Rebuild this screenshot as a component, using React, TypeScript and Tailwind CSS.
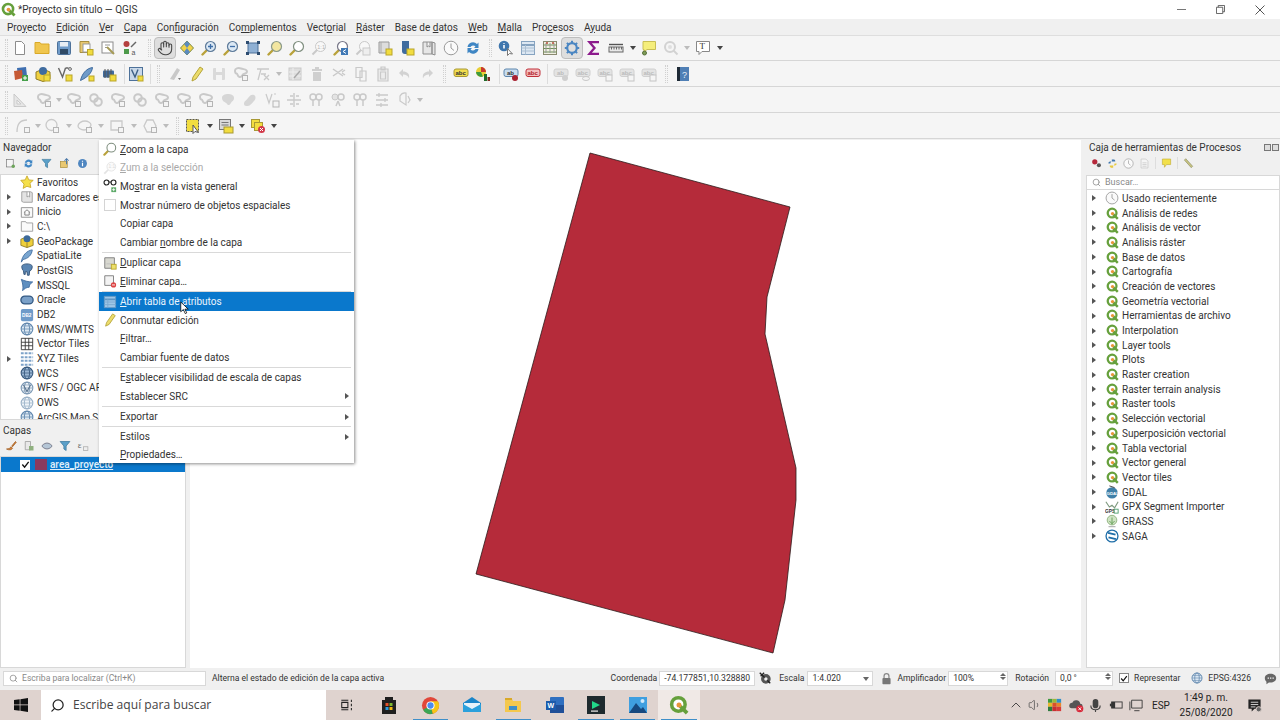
import React from "react";
import { ChevronUp, Hand, Search, Volume1 } from "lucide-react";

const G = "#c9c9c9";
const GD = "#b5b5b5";

function Mag({ fill = "#f4e9a8", sign, ring = "#8a9a8a" }: { fill?: string; sign?: string; ring?: string }) {
  return (
    <>
      <path d="M1.5 14.5 6 10" stroke="#b9a23a" strokeWidth="2.4" strokeLinecap="round" />
      <circle cx="9.5" cy="6.5" r="5" fill={fill} stroke={ring} strokeWidth="1.2" />
      {sign && <path d={sign} stroke="#3f6fa8" strokeWidth="1.3" />}
    </>
  );
}

function Blob({ c = G, box = true }: { c?: string; box?: boolean }) {
  return (
    <>
      <path d="M2 4.5C2 2.5 5 1.5 8 2.5s6 .5 6 3-3 2-4 3-1 3-3.500 2.500S5 7.500 3.500 7.500 2 6 2 4.500z" fill="none" stroke={c} strokeWidth="2" />
      {box && <rect x="9.500" y="9.500" width="5" height="5" fill="#f4f4f4" stroke={GD} />}
    </>
  );
}

function Shape({ d }: { d: string }) {
  return (
    <>
      <path d={d} fill="none" stroke={G} strokeWidth="1.300" />
      <rect x="9.500" y="9.500" width="5" height="5" fill="#f4f4f4" stroke={GD} />
    </>
  );
}

const ico: Record<string, React.ReactNode> = {
  new: <path d="M3.500 1.500h6l3 3v10h-9z" fill="#fff" stroke="#8c8c8c" />,
  open: <path d="M1 4V2.500h5l1 1.500h8v9.500H1z" fill="#f0c64e" stroke="#d9a928" />,
  save: (
    <>
      <rect x="1.500" y="1.500" width="13" height="13" rx="1" fill="#6f9bc9" stroke="#4d7199" />
      <rect x="4" y="2" width="8" height="4.500" fill="#e8eef4" />
      <rect x="4" y="9" width="8" height="5" fill="#2f4a66" />
    </>
  ),
  saveas: (
    <>
      <path d="M2 1.500h9v11H2z" fill="#e9c871" stroke="#a98f3f" />
      <rect x="5" y="4" width="7" height="8" fill="#fff" stroke="#999" />
      <rect x="9.500" y="9.500" width="5.500" height="5.500" fill="#f1dc3f" stroke="#b9a52a" />
    </>
  ),
  layout: (
    <>
      <rect x="2" y="2" width="11" height="11" fill="#fff" stroke="#8c8c8c" />
      <path d="M5 5h5M5 7.500h3" stroke="#999" />
      <path d="M7 7l7 7" stroke="#a59a56" strokeWidth="2" />
    </>
  ),
  style: (
    <>
      <circle cx="4.500" cy="4" r="3" fill="#b5403f" />
      <rect x="2" y="9" width="5" height="5" fill="#4d9a4a" />
      <path d="m9 7 5-5" stroke="#666" strokeWidth="1.500" />
      <text x="9.500" y="14.500" fontSize="7" fill="#555" fontFamily="Liberation Sans">a</text>
    </>
  ),
  hand: <Hand x="0" y="0" width="16" height="16" color="#444" strokeWidth={1.6} />,
  pansel: (
    <>
      <path d="M8 1l6.500 7L8 15 1.500 8z" fill="#f1d34a" stroke="#7c8a45" />
      <path d="M8 1l3 3-3 4-3-4zM8 15l-3-3 3-4 3 4z" fill="#5b8bc0" />
    </>
  ),
  zin: <Mag fill="#dbe8f4" ring="#5d7a99" sign="M7 6.500h5M9.500 4v5" />,
  zout: <Mag fill="#dbe8f4" ring="#5d7a99" sign="M7 6.500h5" />,
  zfull: (
    <>
      <rect x="3" y="3" width="10" height="10" fill="#8fb0d4" stroke="#4d7199" />
      <path d="M1 1h3v3H1zM12 1h3v3h-3zM1 12h3v3H1zM12 12h3v3h-3z" fill="#2d4c70" />
    </>
  ),
  zlayer: <Mag fill="#f2e6a0" />,
  zsel: <Mag fill="#fff" ring="#7f8f7f" />,
  znative: (
    <>
      <path d="M1.500 14.500 6 10" stroke={G} strokeWidth="2" />
      <circle cx="9.500" cy="6.500" r="5" fill="#f8f8f8" stroke={G} />
      <text x="6.300" y="8.500" fontSize="5.500" fill={GD} fontFamily="Liberation Sans">1:1</text>
    </>
  ),
  zlast: (
    <>
      <Mag fill="#fff" ring="#778" />
      <rect x="8" y="8" width="7" height="7" fill="#3f78b5" />
      <path d="M13 9.500 10 11.500l3 2" stroke="#fff" fill="none" />
    </>
  ),
  znext: (
    <>
      <path d="M1.500 14.500 6 10" stroke={G} strokeWidth="2" />
      <circle cx="9.500" cy="6.500" r="5" fill="#f8f8f8" stroke={G} />
      <rect x="8" y="8" width="7" height="7" fill="#eee" stroke={G} />
    </>
  ),
  mapview: (
    <>
      <path d="M2 2h10v11H2z" fill="#ddd" stroke="#999" />
      <path d="M4 2v11" stroke="#aaa" />
      <rect x="9" y="9" width="6" height="6" fill="#f1dc3f" stroke="#b9a52a" />
    </>
  ),
  bookmark: (
    <>
      <path d="M3 1h7v13H6c-2 0-3-1-3-3z" fill="#3f6c9f" />
      <rect x="8" y="9" width="7" height="6" fill="#f1dc3f" stroke="#b9a52a" />
    </>
  ),
  book: <path d="M2 2h9v12H2zM11 2l3 1v12l-3-1zM6 2v5l1.500-1L9 7V2" fill="#e6e6e6" stroke="#8f8f8f" />,
  clock: (
    <>
      <circle cx="8" cy="8" r="6.800" fill="#fafafa" stroke="#9a9a9a" />
      <path d="M8 3.500V8l3 2.500" fill="none" stroke="#9a9a9a" />
    </>
  ),
  refresh: (
    <>
      <path d="M2.500 7a5.500 5.500 0 0 1 9.500-3l1.500-1.500V8H9l1.500-1.500A3 3 0 0 0 5.500 7z" fill="#3f86c4" />
      <path d="M13.500 9A5.500 5.500 0 0 1 4 12l-1.500 1.500V8H7L5.500 9.500A3 3 0 0 0 10.500 9z" fill="#3f86c4" />
    </>
  ),
  identify: (
    <>
      <circle cx="6" cy="6" r="5.300" fill="#3f76ad" />
      <path d="M6 3v.8M6 5v3.500" stroke="#fff" strokeWidth="1.600" />
      <path d="M9.500 8.500v7l2-2 3 .5z" fill="#fff" stroke="#777" />
    </>
  ),
  table: (
    <>
      <rect x="1.500" y="1.500" width="13" height="13" fill="#dce7f2" stroke="#86a3c0" />
      <path d="M1.500 5h13" stroke="#86a3c0" strokeWidth="2" />
      <path d="M5.500 5v9.500M1.500 8h13M1.500 11h13" stroke="#a9bed2" />
    </>
  ),
  stat: (
    <>
      <rect x="1.500" y="1.500" width="13" height="13" fill="#f0efe2" stroke="#8a8a70" />
      <path d="M1.500 5h13M1.500 8.500h13M1.500 12h13" stroke="#6d8f57" />
      <path d="M4 3v10M8 3v10M12 3v10" stroke="#999" />
      <circle cx="5" cy="3" r="1" fill="#b84b3b" />
      <circle cx="11" cy="3" r="1" fill="#b84b3b" />
    </>
  ),
  gear: (
    <>
      <circle cx="8" cy="8" r="4.800" fill="none" stroke="#4b86c2" strokeWidth="2.200" />
      <path d="M8 .8v3M8 12.200v3M.8 8h3M12.200 8h3M2.900 2.900 5 5M11 11l2.100 2.100M13.100 2.900 11 5M5 11l-2.100 2.100" stroke="#4b86c2" strokeWidth="2" />
    </>
  ),
  sigma: <path d="M13 2.200H3.500L8.500 8l-5 5.800H13" fill="none" stroke="#8c1a8c" strokeWidth="2.300" />,
  ruler: (
    <>
      <path d="M1 4.500h14" stroke="#555" strokeWidth="1.400" />
      <rect x="1" y="7" width="14" height="5" fill="#e9e9e9" stroke="#666" />
      <path d="M3.500 7v2.500M6 7v2.500M8.500 7v2.500M11 7v2.500M13.500 7v2.500" stroke="#666" />
    </>
  ),
  note: (
    <>
      <path d="M2 1.500h12.500v8H6L3 12V9.500H2z" fill="#f5ee7b" stroke="#c9bf55" />
      <circle cx="3.500" cy="13" r="2" fill="#7d9a57" stroke="#56703a" />
    </>
  ),
  gsearch: (
    <>
      <circle cx="7" cy="7" r="5" fill="none" stroke="#d2d2d2" strokeWidth="2" />
      <circle cx="7" cy="7" r="2" fill="#dfdfdf" />
      <path d="m10.500 10.500 4 4" stroke="#d2d2d2" strokeWidth="2" />
    </>
  ),
  textbox: (
    <>
      <path d="M1.500 1.500h13v10H7l-3 3v-3H1.500z" fill="#fff" stroke="#888" />
      <text x="4.600" y="9.300" fontSize="9" fill="#333" fontFamily="Liberation Serif">T</text>
    </>
  ),
  addraster: (
    <>
      <path d="M4 2 13 1l1 9-9 2z" fill="#3f6fb0" />
      <path d="M1 5l8-1 1 8-8 2z" fill="#c65a35" />
      <rect x="9" y="9" width="6" height="6" fill="#46a04a" />
      <path d="M12 10v4M10 12h4" stroke="#fff" />
    </>
  ),
  addgpkg: (
    <>
      <path d="M1 6 8 3l7 3v7l-7 2.500L1 13z" fill="#f0d03f" stroke="#8f7d2a" />
      <circle cx="8" cy="5" r="4" fill="#3f6c9f" />
      <rect x="9" y="9" width="6" height="6" fill="#f1dc3f" stroke="#b9a52a" />
    </>
  ),
  addv: (
    <>
      <path d="M1.500 2l4 9 3-9M8.500 2h3" fill="none" stroke="#666" strokeWidth="1.400" />
      <circle cx="13" cy="3" r="1.400" fill="none" stroke="#666" />
      <rect x="9" y="9" width="6" height="6" fill="#f1dc3f" stroke="#b9a52a" />
    </>
  ),
  feather: (
    <>
      <path d="M1.500 14.500C3 8 7 2.500 13.500 1.500 13 7 8 11.500 1.500 14.500z" fill="#6f9bc9" stroke="#3f6c9f" />
      <rect x="10" y="10" width="5" height="5" fill="#f1dc3f" stroke="#b9a52a" />
    </>
  ),
  addmem: (
    <>
      <rect x="2" y="4.500" width="11" height="7" rx="1" fill="#3f6c9f" />
      <path d="M4 3v9M7 3v9M10 3v9" stroke="#555" />
      <rect x="9" y="9" width="6" height="6" fill="#f1dc3f" stroke="#b9a52a" />
    </>
  ),
  addvirt: (
    <>
      <rect x="1.500" y="1.500" width="13" height="13" fill="#c9d8e8" stroke="#4d7199" />
      <path d="M3.500 3.500 7 11l3-7.500" fill="none" stroke="#3c5f85" strokeWidth="1.400" />
      <rect x="10" y="10" width="5" height="5" fill="#f1dc3f" stroke="#b9a52a" />
    </>
  ),
  gpencils: (
    <>
      <path d="M3 13 10 2l3 2-6 10z" fill={G} />
      <path d="M11 12h3l-1.500 2z" fill="#777" />
    </>
  ),
  pencil: <path d="M3 15l1-4L11 1l3 2-7 10z" fill="#ecdc6b" stroke="#b5a53c" />,
  gsave: (
    <>
      <rect x="2" y="2" width="12" height="12" rx="1" fill="#dadada" />
      <rect x="5" y="2" width="6" height="4" fill="#f5f5f5" />
      <rect x="5" y="9" width="6" height="5" fill="#f5f5f5" />
    </>
  ),
  gblob: <Blob />,
  gblob2: (
    <>
      <circle cx="6" cy="6" r="3.800" fill="none" stroke={G} strokeWidth="2" />
      <circle cx="10" cy="10" r="3.800" fill="none" stroke={G} strokeWidth="2" />
    </>
  ),
  gblob3: <path d="M2 6c0-3 3-4 6-4s6 1 6 4-2 3-3 5-3 3-4 1-5-2-5-6z" fill="#d6d6d6" />,
  gblob4: <path d="M2 12c0-3 2-3 4-6s4-4 6-3 2 4 0 6-4 5-6 5-4 0-4-2z" fill="#d6d6d6" />,
  gfx: (
    <>
      <path d="M2 3h12M6 3l-3 11M6 8h5M9 9l5 5M14 9l-5 5" fill="none" stroke={G} strokeWidth="1.300" />
    </>
  ),
  gtabed: (
    <>
      <rect x="2" y="2" width="12" height="12" fill="#dedede" stroke={G} />
      <path d="M2 6h12M2 10h12M6 2v12" stroke="#eee" />
      <path d="m7 12 6-7" stroke="#aaa" strokeWidth="1.500" />
    </>
  ),
  gtrash: <path d="M3 3h10v2H3zM4 6h8v9H4zM6 1h4v2H6z" fill="#cfcfcf" />,
  gscis: <path d="M2 3l10 7M2 10l10-7M14 4l-3 2M14 9l-3-2" fill="none" stroke={G} strokeWidth="1.500" />,
  gcopy: <path d="M3 1.500h6v10H3zM7 5h6v10H7z" fill="#f5f5f5" stroke={G} strokeWidth="1.200" />,
  gpaste: <path d="M3 3h10v12H3zM6 1h4v3H6zM5.500 6h5v7h-5z" fill="#ececec" stroke={G} strokeWidth="1.200" />,
  gundo: <path d="M6 3 2 7l4 4V8.500c3 0 5 1 6 4 1-5-2-7-6-7z" fill="#d2d2d2" />,
  gredo: <path d="m10 3 4 4-4 4V8.500c-3 0-5 1-6 4-1-5 2-7 6-7z" fill="#d2d2d2" />,
  gdig: (
    <>
      <path d="M2 14.500V2l12 12.500z" fill="#e6e6e6" stroke={G} />
      <path d="M5 12V8l4 4z" fill="#f5f5f5" stroke={G} />
    </>
  ),
  gvert: (
    <>
      <path d="M2 2l3 9 3-9M10 2h2" fill="none" stroke={G} strokeWidth="1.200" />
      <rect x="9" y="9" width="6" height="6" fill="#f4f4f4" stroke={GD} />
    </>
  ),
  gsplit: <path d="M1 8h14M8 1v14M4 4h3M10 12h3M4 12h3M10 4h3" fill="none" stroke={G} strokeWidth="1.400" />,
  goff1: (
    <>
      <circle cx="5" cy="5" r="3" fill="none" stroke={G} strokeWidth="1.500" />
      <circle cx="11" cy="5" r="3" fill="none" stroke={G} strokeWidth="1.500" />
      <path d="M5 8v6M11 8v6" stroke={G} strokeWidth="1.500" />
    </>
  ),
  goff2: (
    <>
      <circle cx="5" cy="5" r="3" fill="#e3e3e3" stroke={G} />
      <circle cx="11" cy="5" r="3" fill="none" stroke={G} strokeWidth="1.500" />
      <path d="M8 9l-2 5M8 9l2 5" stroke={G} strokeWidth="1.500" />
    </>
  ),
  glines: <path d="M2 3h12M2 8h12M2 13h12M5 1v4M11 6v4M7 11v4" fill="none" stroke={G} strokeWidth="1.300" />,
  grot: <path d="M4 4a6 6 0 0 1 6-3v12L4 9zM12 4l2 4-2 3" fill="none" stroke={G} strokeWidth="1.200" />,
  gcurve: <Shape d="M2 14C2 6 5 2 12 2" />,
  gcircle: <Shape d="M2 7a5.500 5.500 0 1 0 11 0 5.500 5.500 0 1 0-11 0" />,
  gell: <Shape d="M1 8c0-3 4-5 7-5s6 2 6 4-4 5-7 5-6-2-6-4z" />,
  grect: <Shape d="M2 3h11v9H2z" />,
  gpoly: <Shape d="M5 2h6l3 6-3 6H5L2 8z" />,
  selrect: (
    <>
      <rect x="1.500" y="1.500" width="12" height="12" fill="#f2dd3f" stroke="#555" strokeDasharray="2 1" />
      <path d="M8 7v8.500l2-2 3.500 1z" fill="#fff" stroke="#555" />
    </>
  ),
  selform: (
    <>
      <rect x="1.500" y="1.500" width="11" height="10" fill="#d9d9d9" stroke="#777" />
      <path d="M3.500 4.500h7M3.500 7h7" stroke="#777" />
      <rect x="6" y="9" width="9" height="6" fill="#f2dd3f" stroke="#a89935" />
    </>
  ),
  desel: (
    <>
      <rect x="1.500" y="1.500" width="8" height="8" fill="#f2dd3f" stroke="#a89935" />
      <rect x="4.500" y="4.500" width="8" height="8" fill="#f2dd3f" stroke="#a89935" />
      <circle cx="11.500" cy="11.500" r="3.500" fill="#d2394a" />
      <path d="m10 10 3 3m0-3-3 3" stroke="#fff" />
    </>
  ),
  abcY: <Label bg="#f2dd4f" bd="#a89935" c="#333" t="abc" />,
  diagram: (
    <>
      <circle cx="6" cy="6" r="5" fill="#e8cf35" />
      <path d="M6 6V1a5 5 0 0 1 5 5z" fill="#c7392f" />
      <path d="M6 6H1a5 5 0 0 0 7 4.500z" fill="#3f9a3f" />
      <rect x="9" y="8" width="3" height="7" fill="#1f6b2a" />
      <rect x="12.500" y="11" width="2.500" height="4" fill="#7d2a1f" />
    </>
  ),
  abPin: (
    <>
      <Label bg="#c9dcee" bd="#5d86ad" c="#333" t="ab" />
      <circle cx="12" cy="12" r="3" fill="#a82030" />
    </>
  ),
  abcR: <Label bg="#f4c0c0" bd="#c0303a" c="#b0202a" t="abc" />,
  gab: (
    <>
      <Label bg="#e3e3e3" bd="#d0d0d0" c="#bbb" t="ab" />
      <circle cx="12" cy="12" r="3" fill="#cfcfcf" />
    </>
  ),
  gabc1: (
    <>
      <Label bg="#e3e3e3" bd="#d0d0d0" c="#bbb" t="abc" />
      <ellipse cx="11" cy="12.500" rx="3.500" ry="2" fill="#f2f2f2" stroke="#c8c8c8" />
    </>
  ),
  gabc2: (
    <>
      <Label bg="#e3e3e3" bd="#d0d0d0" c="#bbb" t="abc" />
      <rect x="9" y="9" width="6" height="6" fill="#f5f5f5" stroke="#c4c4c4" />
    </>
  ),
  help: (
    <>
      <rect x="2" y="1" width="12" height="14" fill="#4f7fb5" />
      <rect x="2" y="1" width="3" height="14" fill="#1e2a36" />
      <text x="7" y="11.500" fontSize="9" fill="#e7eef6" fontFamily="Liberation Sans">?</text>
    </>
  ),
  star: <path d="m8 1 2.100 4.600 5 .5-3.700 3.300 1 4.900L8 12.900l-4.400 2.400 1-4.900L.900 6.100l5-.5z" fill="#f5e04a" stroke="#c9a92a" />,
  bmk: <path d="M2 2h10l2 1v11H4l-2-1zM8 2v6l1.500-1L11 8V2" fill="#e3e3e3" stroke="#9a9a9a" />,
  home: (
    <>
      <path d="M1.500 3h13v11h-13z" fill="#fafafa" stroke="#8c8c8c" />
      <path d="M4.500 8.500 8 5.500l3.500 3M5.500 8v3.500h5V8" fill="none" stroke="#777" />
    </>
  ),
  folder: <path d="M1.500 3h5l1 1.500h7v9.500h-13z" fill="#fafafa" stroke="#9a9a9a" />,
  gpkg: (
    <>
      <path d="M1 6 8 3l7 3v7l-7 2.500L1 13z" fill="#efcf3a" stroke="#8f7d2a" />
      <path d="M8 1.500a4 4 0 0 1 0 8 4 4 0 0 1 0-8z" fill="#3d6a9a" />
      <path d="M8 9.500v6" stroke="#8f7d2a" />
    </>
  ),
  slite: <path d="M1.500 15C2.500 8 7 2 14 1c-.500 6-5 10-10.500 11z" fill="#7aa6d0" stroke="#3f6c9f" />,
  pg: <path d="M2 4c0-2 3-3 6-3s6 1 6 3-1 5-3 5l-.5 5H8.500L8 10H6v3H4.500L4 9C3 8.500 2 6 2 4z" fill="#5b86b3" stroke="#2f4f73" />,
  mssql: <path d="M1.500 1.500c4 2 8 3 13 3-3 2-4 4-4 6-3 0-6 2-7.500 4 1-4 0-9-1.500-13z" fill="#5f8fc0" stroke="#3f6c9f" />,
  oracle: <rect x="1" y="3.500" width="14" height="9" rx="4.500" fill="#7aa0c8" stroke="#355a83" strokeWidth="1.500" />,
  db2: (
    <>
      <rect x="1" y="1" width="14" height="14" rx="2" fill="#6f9bc9" />
      <text x="2.300" y="10" fontSize="5.400" fill="#fff" fontFamily="Liberation Sans" fontWeight="bold">DB2</text>
    </>
  ),
  globe: <Globe c="#5f86ad" fill="#dbe7f2" />,
  globeD: <Globe c="#36587d" fill="#9ab6d3" />,
  globeL: <Globe c="#9ab1c7" fill="#eef3f8" />,
  wfs: (
    <>
      <Globe c="#7a97b3" fill="#eef3f8" />
      <path d="M4 4.500 8 12l4-7.500" fill="none" stroke="#5c7691" strokeWidth="1.300" />
    </>
  ),
  vtiles: <path d="M1.500 1.500h13v13h-13zM1.500 6h13M1.500 10h13M6 1.500v13M10 1.500v13" fill="none" stroke="#333" />,
  xyz: <path d="M1 1.500h14M1 6h14M1 10h14M1 14.500h14" fill="none" stroke="#7ea3c9" strokeWidth="2.400" strokeDasharray="3.200 1.200" />,
  brush: <path d="M2 12c3 0 5-1 6-3l2 2c-1 2-4 3-8 1zM9 8l5-6 1 1-5 6z" fill="#d8823a" stroke="#9c5a1e" />,
  gadd: (
    <>
      <path d="M3 2h7v11H3z" fill="#e8e8e8" stroke="#999" />
      <rect x="8" y="8" width="6" height="6" fill="#8fb07f" />
    </>
  ),
  eye: <path d="M1 8s3-4 7-4 7 4 7 4-3 4-7 4-7-4-7-4z" fill="#b5c6d6" stroke="#667" />,
  filter: <path d="M1.500 2h13l-5 6v6l-3-2V8z" fill="#5ba0c9" stroke="#3e7a9e" />,
  epsilon: (
    <>
      <text x="1" y="11" fontSize="12" fill="#666" fontFamily="Liberation Serif">ε</text>
      <rect x="8.500" y="9" width="6" height="5" fill="#eee" stroke="#aaa" />
    </>
  ),
  newgeo: (
    <>
      <rect x="2" y="2" width="10" height="11" fill="#f5f5f5" stroke="#777" />
      <circle cx="12" cy="12" r="2.500" fill="#6ca45a" />
    </>
  ),
  arrowUp: (
    <>
      <rect x="2" y="5" width="10" height="9" fill="#e9c871" stroke="#a98f3f" />
      <path d="M11 9V2M8 4l3-3 3 3" fill="none" stroke="#4b78a8" strokeWidth="1.500" />
    </>
  ),
  info: (
    <>
      <circle cx="8" cy="8" r="6.500" fill="#4f86c0" />
      <path d="M8 4v1.500M8 7v5" stroke="#fff" strokeWidth="1.700" />
    </>
  ),
  gears: (
    <>
      <circle cx="5.500" cy="5.500" r="3.800" fill="#b5283a" />
      <circle cx="11.500" cy="10.500" r="3" fill="#555" />
    </>
  ),
  python: (
    <>
      <path d="M2 8c0-3 2-3 5-3V2h3c2 0 2 2 2 3H7c-2 0-2 3-2 3z" fill="#3f76ad" />
      <path d="M14 8c0 3-2 3-5 3v3H6c-2 0-2-2-2-3h5c2 0 2-3 2-3z" fill="#e8c93f" />
    </>
  ),
  hist: <path d="M3 1.500h7l3 3v10H3zM5 7h6M5 9.500h6M5 12h6" fill="#f5f5f5" stroke="#c5c5c5" />,
  edit: <path d="M2 1.500h12v8H8l-3 4v-4H2z" fill="#f2e04a" stroke="#c5b23a" />,
  wrench: <path d="m2 3 2-2 10 11-2 2z" fill="#c9c57e" stroke="#8f8f6a" />,
  gdal: (
    <>
      <circle cx="8" cy="9" r="6.500" fill="#3f7fa8" />
      <path d="M5 1l6 2" stroke="#333" />
      <text x="1.800" y="11.500" fontSize="5" fill="#fff" fontWeight="bold" fontFamily="Liberation Sans">GDAL</text>
    </>
  ),
  gpx: (
    <>
      <path d="M1 2l4 6 3-2 3 3 4-7" fill="none" stroke="#7f9a7f" strokeWidth="1.300" />
      <text x="0" y="15" fontSize="5.500" fill="#333" fontFamily="Liberation Sans" fontWeight="bold">GPS</text>
      <rect x="10.500" y="10.500" width="4.500" height="4.500" fill="#fff" stroke="#4a9a6a" />
    </>
  ),
  grass: (
    <>
      <circle cx="8" cy="7" r="5.500" fill="#cfe3c4" stroke="#8bb07a" />
      <path d="M8 12V4M5 8l3 3 3-3" fill="none" stroke="#5f9a4f" />
      <path d="M4 14.500h8" stroke="#999" />
    </>
  ),
  saga: (
    <>
      <circle cx="8" cy="8" r="6.800" fill="#fff" stroke="#1f6ea8" strokeWidth="1.500" />
      <path d="M3.500 4.500 12 6.500M4 9.500l8.500 2" stroke="#1f6ea8" strokeWidth="2" />
    </>
  ),
};

function Label({ bg, bd, c, t }: { bg: string; bd: string; c: string; t: string }) {
  return (
    <>
      <rect x="1" y="3" width="14" height="7.500" rx="2" fill={bg} stroke={bd} />
      <text x={t === "ab" ? 4 : 2.400} y="9" fontSize="6" fontFamily="Liberation Sans" fontWeight="bold" fill={c}>{t}</text>
    </>
  );
}

function Globe({ c, fill }: { c: string; fill: string }) {
  return (
    <>
      <circle cx="8" cy="8" r="6.700" fill={fill} stroke={c} strokeWidth="1.200" />
      <ellipse cx="8" cy="8" rx="3" ry="6.700" fill="none" stroke={c} />
      <path d="M1.500 8h13M2.500 4.500h11M2.500 11.500h11" stroke={c} strokeWidth=".8" />
    </>
  );
}

function Icon({ name, className = "h-4 w-4" }: { name: string; className?: string }) {
  return (
    <svg viewBox="0 0 16 16" className={`${className} shrink-0`}>
      {ico[name]}
    </svg>
  );
}

function QgisLogo({ className = "h-4 w-4" }: { className?: string }) {
  return (
    <svg viewBox="0 0 16 16" className={`${className} shrink-0`}>
      <circle cx="7.500" cy="7.500" r="5.400" fill="#fff" stroke="#66a03c" strokeWidth="2.800" />
      <path d="m9 9 5.500 5.500" stroke="#66a03c" strokeWidth="3" />
      <circle cx="8" cy="8" r="2" fill="#e8953a" />
    </svg>
  );
}

const arrows: Record<string, string> = {
  a7: "w-[7px]", a10: "w-[10px]", a11: "w-[11px]", a16: "w-[16px]",
  d7: "w-[7px]", d8: "w-[8px]", d10: "w-[10px]", d11: "w-[11px]",
};

function Tok({ t }: { t: string }) {
  if (t.startsWith("w-")) return <div className={t} />;
  if (t === "sep") return <div className="h-[20px] w-px bg-[#dcdcdc]" />;
  if (t === "grip") return <div className="h-[18px] w-[3px] border-x border-dotted border-[#d0d0d0]" />;
  if (arrows[t]) {
    return (
      <div className={`${arrows[t]} flex items-center justify-center`}>
        <div className={`h-0 w-0 border-x-[3.500px] border-t-[4px] border-x-transparent ${t[0] === "a" ? "border-t-[#444]" : "border-t-[#bcbcbc]"}`} />
      </div>
    );
  }
  const active = t.endsWith("*");
  const name = active ? t.slice(0, -1) : t;
  return (
    <div className={`flex h-[22px] w-[22px] items-center justify-center rounded-sm ${active ? "border border-[#bdbdbd] bg-[#dedede]" : ""}`}>
      <Icon name={name} />
    </div>
  );
}

const rows: { cls: string; items: string[] }[] = [
  {
    cls: "h-[25px] pl-[5px]",
    items: ["grip", "w-px", "new", "open", "save", "saveas", "layout", "style", "w-[7px]", "grip", "w-[3px]",
      "hand*", "pansel", "zin", "zout", "zfull", "zlayer", "zsel", "znative", "zlast", "znext", "mapview", "bookmark", "book", "clock", "refresh",
      "w-[5px]", "grip", "w-[3px]", "identify", "table", "stat", "gear*", "sigma", "ruler", "a11", "note", "gsearch", "d10", "textbox", "a11"],
  },
  {
    cls: "h-[26px] pl-[5px]",
    items: ["grip", "w-[2px]", "addraster", "addgpkg", "addv", "feather", "addmem", "w-[4px]", "sep", "addvirt", "w-[3px]", "sep", "w-[6px]", "grip", "w-[4px]",
      "gpencils", "pencil", "gsave", "gblob", "gfx", "d10", "gtabed", "gtrash", "gscis", "gcopy", "gpaste", "gundo", "gredo", "w-[5px]", "grip", "w-[4px]",
      "abcY", "diagram", "w-[5px]", "sep", "abPin", "abcR", "w-[3px]", "sep", "w-[2px]", "gab", "gabc1", "gabc2", "gabc2", "gabc2", "w-[5px]", "grip", "w-[4px]", "help"],
  },
  {
    cls: "h-[26px] pl-[5px]",
    items: ["grip", "w-px", "gdig", "w-[2px]", "gblob", "d8", "gblob", "gblob2", "gblob", "gblob2", "gblob", "gblob", "gblob", "gblob3", "gblob4", "gvert", "gsplit", "goff1", "goff2", "goff1", "glines", "grot", "d10"],
  },
  {
    cls: "h-[26px] pl-[5px]",
    items: ["grip", "w-[4px]", "gcurve", "d7", "gcircle", "d11", "gell", "d10", "grect", "d11", "gpoly", "d10", "w-[5px]", "grip", "w-[3px]", "selrect", "a11", "selform", "a10", "desel", "a10"],
  },
];

const menuBar = ["Pro&yecto", "&Edición", "&Ver", "&Capa", "Con&figuración", "Co&mplementos", "Vect&orial", "&Ráster", "Base de &datos", "&Web", "&Malla", "Pro&cesos", "A&yuda"];

function Mn({ s }: { s: string }) {
  const i = s.indexOf("&");
  if (i < 0) return <>{s}</>;
  return (
    <>
      {s.slice(0, i)}
      <u>{s[i + 1]}</u>
      {s.slice(i + 2)}
    </>
  );
}

type MenuItem = { t: string; icon?: React.ReactNode; off?: boolean; hi?: boolean; sub?: boolean; last?: boolean } | "-";

const menu: MenuItem[] = [
  { t: "&Zoom a la capa", icon: <Icon name="zsel" className="h-[14px] w-[14px]" /> },
  { t: "&Zum a la selección", off: true, icon: <Icon name="znative" className="h-[14px] w-[14px] opacity-50" /> },
  {
    t: "Mo&strar en la vista general",
    icon: (
      <svg viewBox="0 0 16 16" className="h-[14px] w-[14px]">
        <circle cx="4" cy="4" r="2.800" fill="#fff" stroke="#222" strokeWidth="1.300" />
        <circle cx="12" cy="4" r="2.800" fill="#fff" stroke="#222" strokeWidth="1.300" />
        <path d="M6.800 3.500h2.400" stroke="#222" />
        <rect x="9.500" y="9.500" width="5.500" height="5.500" fill="#5aa866" />
        <path d="M12.200 10.500v3.400M10.500 12.200h3.400" stroke="#fff" />
      </svg>
    ),
  },
  { t: "Mostrar número de objetos espaciales", icon: <div className="h-[12px] w-[12px] border border-[#d4d4d4]" /> },
  { t: "Copiar capa" },
  { t: "Cambiar &nombre de la capa" },
  "-",
  {
    t: "&Duplicar capa",
    icon: (
      <svg viewBox="0 0 16 16" className="h-[14px] w-[14px]">
        <path d="M2 2h11v12H2z" fill="#d8d8d0" stroke="#777" />
        <path d="M4 9h7" stroke="#bbb" />
        <rect x="9.500" y="9.500" width="5.500" height="5.500" fill="#ecdf6a" stroke="#b9a52a" />
      </svg>
    ),
  },
  {
    t: "&Eliminar capa…",
    icon: (
      <svg viewBox="0 0 16 16" className="h-[14px] w-[14px]">
        <path d="M2 2h10v11H2z" fill="#f3f3f3" stroke="#777" />
        <circle cx="12" cy="12.500" r="3" fill="#d44" />
        <path d="M10.300 12.500h3.400" stroke="#fff" />
      </svg>
    ),
  },
  "-",
  { t: "&Abrir tabla de atributos", hi: true, icon: <Icon name="table" className="h-[14px] w-[14px] opacity-70" /> },
  { t: "Conmutar edición", icon: <Icon name="pencil" className="h-[14px] w-[14px]" /> },
  { t: "&Filtrar…" },
  { t: "Cambiar fuente de datos" },
  "-",
  { t: "E&stablecer visibilidad de escala de capas" },
  { t: "Establecer SRC", sub: true },
  "-",
  { t: "Exportar", sub: true },
  "-",
  { t: "Estilos", sub: true },
  { t: "&Propiedades…", last: true },
];

function ContextMenu() {
  return (
    <div className="absolute left-[99px] top-[139.700px] z-10 w-[255px] bg-white text-[10px] text-[#333] shadow-[1px_1px_3px_rgba(0,0,0,0.45)]">
      {menu.map((m, i) =>
        m === "-" ? (
          <div key={i} className="flex h-[1.500px] items-center px-[3px]">
            <div className="h-px w-full bg-[#d9d9d9]" />
          </div>
        ) : (
          <div key={i} className={`relative flex items-center pl-[21px] ${m.last ? "h-[17px]" : "h-[18.700px]"} ${m.hi ? "bg-[#0a78cc] text-[#eaf4fc]" : ""} ${m.off ? "text-[#a8a8a8]" : ""}`}>
            {m.icon && <div className="absolute left-[4px] flex h-full w-[14px] items-center justify-center">{m.icon}</div>}
            <span><Mn s={m.t} /></span>
            {m.sub && <div className="absolute right-[5px] h-0 w-0 border-y-[3.500px] border-l-[4px] border-y-transparent border-l-[#555]" />}
          </div>
        )
      )}
    </div>
  );
}

const browser: [string, string, boolean][] = [
  ["star", "Favoritos", false], ["bmk", "Marcadores es", true], ["home", "Inicio", true], ["folder", "C:\\", true],
  ["gpkg", "GeoPackage", true], ["slite", "SpatiaLite", false], ["pg", "PostGIS", false], ["mssql", "MSSQL", false],
  ["oracle", "Oracle", false], ["db2", "DB2", false], ["globe", "WMS/WMTS", false], ["vtiles", "Vector Tiles", false],
  ["xyz", "XYZ Tiles", true], ["globeD", "WCS", false], ["wfs", "WFS / OGC AP", false], ["globeL", "OWS", false], ["globe", "ArcGIS Map S", false],
];

const toolbox: [string, string][] = [
  ["clock", "Usado recientemente"], ["q", "Análisis de redes"], ["q", "Análisis de vector"], ["q", "Análisis ráster"],
  ["q", "Base de datos"], ["q", "Cartografía"], ["q", "Creación de vectores"], ["q", "Geometría vectorial"],
  ["q", "Herramientas de archivo"], ["q", "Interpolation"], ["q", "Layer tools"], ["q", "Plots"], ["q", "Raster creation"],
  ["q", "Raster terrain analysis"], ["q", "Raster tools"], ["q", "Selección vectorial"], ["q", "Superposición vectorial"],
  ["q", "Tabla vectorial"], ["q", "Vector general"], ["q", "Vector tiles"], ["gdal", "GDAL"], ["gpx", "GPX Segment Importer"],
  ["grass", "GRASS"], ["saga", "SAGA"],
];

function Caret() {
  return <div className="h-0 w-0 border-y-[3.500px] border-l-[4px] border-y-transparent border-l-[#555]" />;
}

function LeftPanel() {
  return (
    <div className="flex w-[186px] shrink-0 flex-col">
      <div className="flex h-[15px] items-center pl-[3px] text-[10px]">Navegador</div>
      <div className="flex h-[16px] items-center gap-[7px] pl-[5px]">
        {["newgeo", "refresh", "filter", "arrowUp", "info"].map((n) => <Icon key={n} name={n} className="h-[11px] w-[11px]" />)}
      </div>
      <div className="mt-[3px] h-[246px] overflow-hidden border border-[#d8d8d8] bg-white">
        {browser.map(([icon, label, exp]) => (
          <div key={label} className="flex h-[14.700px] items-center">
            <div className="flex w-[15px] justify-center">{exp && <Caret />}</div>
            <div className="ml-[3px] flex w-[16px] justify-center"><Icon name={icon} className="h-[14px] w-[14px]" /></div>
            <span className="ml-[2px] whitespace-nowrap text-[10px]">{label}</span>
          </div>
        ))}
      </div>
      <div className="flex h-[18px] items-end pl-[3px] text-[10px]">Capas</div>
      <div className="flex h-[16px] items-center gap-[6px] pl-[5px]">
        {["brush", "gadd", "eye", "filter", "epsilon"].map((n) => <Icon key={n} name={n} className="h-[12px] w-[12px]" />)}
      </div>
      <div className="mt-[2px] min-h-0 flex-1 border border-[#d8d8d8] bg-white">
        <div className="flex h-[15px] items-center bg-[#0a78cc] pl-[19px]">
          <div className="flex h-[10px] w-[10px] items-center justify-center bg-white">
            <svg viewBox="0 0 10 10" className="h-[9px] w-[9px]"><path d="m1.500 5 2.500 3 4.500-6" fill="none" stroke="#111" strokeWidth="1.500" /></svg>
          </div>
          <div className="ml-[5px] h-[11px] w-[12px] bg-[#8a3a5f]" />
          <span className="ml-[3px] text-[10px] font-semibold text-[#dcecf8] underline">area_proyecto</span>
        </div>
      </div>
    </div>
  );
}

function RightPanel() {
  return (
    <div className="flex w-[195px] shrink-0 flex-col pl-[1px]">
      <div className="flex h-[15px] items-center justify-between pl-[3px] pr-[1px] text-[10px]">
        <span>Caja de herramientas de Procesos</span>
        <div className="flex gap-px">
          <div className="h-[7px] w-[7px] border border-[#777] bg-[#ddd]" />
          <div className="h-[7px] w-[7px] border border-[#777] bg-[#ddd]" />
        </div>
      </div>
      <div className="flex h-[16px] items-center gap-[5px] pl-[5px]">
        {["gears", "python", "clock", "hist"].map((n) => <Icon key={n} name={n} className="h-[11px] w-[11px]" />)}
        <div className="h-[12px] w-px bg-[#ddd]" />
        <Icon name="edit" className="h-[11px] w-[11px]" />
        <div className="h-[12px] w-px bg-[#ddd]" />
        <Icon name="wrench" className="h-[11px] w-[11px]" />
      </div>
      <div className="mt-[4px] flex h-[15px] shrink-0 items-center border border-[#d8d8d8] bg-white pl-[5px] text-[9px] text-[#888]">
        <Search size={9} color="#888" />
        <span className="ml-[4px]">Buscar…</span>
      </div>
      <div className="min-h-0 flex-1 overflow-hidden border-x border-b border-[#d8d8d8] bg-white pt-[1px]">
        {toolbox.map(([icon, label]) => (
          <div key={label} className="flex h-[14.700px] items-center">
            <div className="flex w-[14px] justify-center"><Caret /></div>
            <div className="ml-[4px] flex w-[14px] justify-center">
              {icon === "q" ? <QgisLogo className="h-[13px] w-[13px]" /> : <Icon name={icon} className="h-[14px] w-[14px]" />}
            </div>
            <span className="ml-[3px] text-[10px]">{label}</span>
          </div>
        ))}
      </div>
    </div>
  );
}

function MapCanvas() {
  return (
    <div className="mx-[4px] min-w-0 flex-1 bg-white">
      <svg viewBox="0 0 891 528" className="h-full w-full">
        <polygon points="400,13 600,67 577,157 575,194 606,328 606,360 595,460 583,513 286,434" fill="#b52b3a" stroke="#2b1a1a" strokeWidth="0.8" />
      </svg>
    </div>
  );
}

function Field({ text, className }: { text: string; className: string }) {
  return <div className={`flex h-[15px] items-center border border-[#d8d8d8] bg-white pl-[4px] text-[8.600px] ${className}`}>{text}</div>;
}

function Spin() {
  return (
    <div className="absolute right-[2px] top-[2px] flex flex-col gap-px">
      <div className="h-0 w-0 border-x-[3px] border-b-[3.500px] border-x-transparent border-b-[#666]" />
      <div className="h-0 w-0 border-x-[3px] border-t-[3.500px] border-x-transparent border-t-[#666]" />
    </div>
  );
}

function StatusBar() {
  return (
    <div className="flex h-[22px] shrink-0 items-center pb-[2px] text-[8.600px] text-[#333]">
      <div className="ml-[3px] flex h-[15px] w-[203px] items-center border border-[#d8d8d8] bg-white pl-[5px] text-[#888]">
        <Search size={9} color="#888" />
        <span className="ml-[4px]">Escriba para localizar (Ctrl+K)</span>
      </div>
      <span className="ml-[6px]">Alterna el estado de edición de la capa activa</span>
      <span className="ml-auto">Coordenada</span>
      <Field text="-74.177851,10.328880" className="ml-[2px] w-[96px]" />
      <svg viewBox="0 0 16 16" className="ml-[3px] h-[14px] w-[14px]">
        <circle cx="9" cy="9" r="5.500" fill="#555" />
        <path d="M2 2l12 12M3 6l4-4" stroke="#222" strokeWidth="1.500" />
        <circle cx="9" cy="9" r="2" fill="#eee" />
      </svg>
      <span className="ml-[7px]">Escala</span>
      <div className="relative ml-[3px] w-[66px]">
        <Field text="1:4.020" className="w-full" />
        <div className="absolute right-[4px] top-[6px] h-0 w-0 border-x-[3px] border-t-[4px] border-x-transparent border-t-[#666]" />
      </div>
      <svg viewBox="0 0 16 16" className="ml-[7px] h-[13px] w-[13px]">
        <path d="M5 8V5a3 3 0 0 1 6 0v3" fill="none" stroke="#888" strokeWidth="1.500" />
        <rect x="3" y="7.500" width="10" height="7.500" rx="1" fill="#777" />
      </svg>
      <span className="ml-[4px]">Amplificador</span>
      <div className="relative ml-[2px] w-[60px]">
        <Field text="100%" className="w-full" />
        <Spin />
      </div>
      <span className="ml-[7px]">Rotación</span>
      <div className="relative ml-[6px] w-[58px]">
        <Field text="0,0 °" className="w-full" />
        <Spin />
      </div>
      <div className="ml-[6px] flex h-[10px] w-[10px] items-center justify-center border border-[#888] bg-white">
        <svg viewBox="0 0 10 10" className="h-[9px] w-[9px]"><path d="m1.500 5 2.500 3 4.500-6" fill="none" stroke="#111" strokeWidth="1.500" /></svg>
      </div>
      <span className="ml-[5px]">Representar</span>
      <Icon name="globe" className="ml-[11px] h-[12px] w-[12px]" />
      <span className="ml-[5px]">EPSG:4326</span>
      <svg viewBox="0 0 16 16" className="ml-[12.500px] mr-[3.500px] h-[13px] w-[13px]">
        <path d="M8 2c4 0 7 2 7 5.500S12 13 8 13H6l-3 2v-3C2 11 1 9.500 1 7.500 1 4 4 2 8 2z" fill="#666" />
        <path d="M4.500 7.500h1.500M7.500 7.500H9M10.500 7.500H12" stroke="#fff" strokeWidth="1.500" />
      </svg>
    </div>
  );
}

const taskIcons: { el: React.ReactNode; run?: boolean; active?: boolean }[] = [
  {
    el: (
      <svg viewBox="0 0 20 20" className="h-[20px] w-[20px]">
        <path d="M3 5h3V2h8v3h3v14H3z" fill="#1f1f1f" />
        <rect x="6.500" y="8" width="3" height="3" fill="#e2502a" />
        <rect x="10.500" y="8" width="3" height="3" fill="#7cb82f" />
        <rect x="6.500" y="12" width="3" height="3" fill="#2a9de2" />
        <rect x="10.500" y="12" width="3" height="3" fill="#f2b711" />
      </svg>
    ),
  },
  {
    run: true,
    el: (
      <svg viewBox="0 0 20 20" className="h-[19px] w-[19px]">
        <circle cx="10" cy="10" r="9" fill="#e0473a" />
        <path d="M10 10 2.200 14.500A9 9 0 0 0 12.500 18.600z" fill="#3aa655" />
        <path d="M10 10l2.500 8.600A9 9 0 0 0 17.800 5.500H10z" fill="#f5c518" />
        <circle cx="10" cy="10" r="4.300" fill="#fff" />
        <circle cx="10" cy="10" r="3.300" fill="#4a8bf0" />
      </svg>
    ),
  },
  {
    el: (
      <svg viewBox="0 0 20 20" className="h-[20px] w-[20px]">
        <path d="M10 2 19 8v9H1V8z" fill="#1a85c9" />
        <path d="M2 8h16v7l-8 0-8 0z" fill="#e6f2fa" />
        <path d="M1 9l9 5 9-5v8H1z" fill="#2aa0dc" />
      </svg>
    ),
  },
  {
    run: true,
    el: (
      <svg viewBox="0 0 20 20" className="h-[20px] w-[20px]">
        <path d="M2 4h7l1 2h8v11H2z" fill="#f4c84e" />
        <rect x="2" y="3" width="7" height="2" fill="#d9a928" />
        <rect x="6" y="11" width="8" height="4" fill="#3f8fc9" />
      </svg>
    ),
  },
  {
    el: (
      <svg viewBox="0 0 20 20" className="h-[20px] w-[20px]">
        <rect x="5" y="2" width="14" height="16" rx="1" fill="#2f6fc0" />
        <rect x="5" y="10" width="14" height="8" fill="#1f4f98" />
        <rect x="1" y="6" width="10" height="9" fill="#1b5bab" />
        <text x="2.500" y="13" fontSize="7" fill="#fff" fontWeight="bold" fontFamily="Liberation Sans">W</text>
      </svg>
    ),
  },
  {
    run: true,
    el: (
      <svg viewBox="0 0 20 20" className="h-[20px] w-[20px]">
        <rect x="1" y="1" width="18" height="18" fill="#1e2a2e" />
        <path d="M6 6l8 4-8 4z" fill="#21d789" />
        <rect x="5" y="15.500" width="7" height="1.200" fill="#eee" />
      </svg>
    ),
  },
  {
    run: true,
    el: (
      <svg viewBox="0 0 20 20" className="h-[20px] w-[20px]">
        <rect x="1" y="2" width="18" height="16" fill="#3f9fe0" />
        <path d="M1 18 8 8l5 6 2-2 4 6z" fill="#17497f" />
        <circle cx="14.500" cy="6" r="2" fill="#cfe9fb" />
      </svg>
    ),
  },
  { run: true, active: true, el: <QgisLogo className="h-[20px] w-[20px]" /> },
];

function Taskbar() {
  return (
    <div className="flex h-[30px] shrink-0 items-stretch bg-[#dfd3cf] text-[#222]">
      <div className="flex w-[41px] items-center justify-center">
        <svg viewBox="0 0 16 16" className="h-[14px] w-[14px]">
          <path d="M0 2.300 6.500 1.400v6H0zM7.300 1.300 16 0v7.400H7.300zM0 8.300h6.500v6.300L0 13.700zM7.300 8.300H16V16l-8.700-1.300z" fill="#111" />
        </svg>
      </div>
      <div className="flex w-[285px] items-center bg-white pl-[9px]">
        <Search size={15} color="#222" className="-scale-x-100" />
        <span className="ml-[8px] font-['Open_Sans',sans-serif] text-[12.100px] text-[#444]">Escribe aquí para buscar</span>
      </div>
      <div className="flex w-[42.500px] items-center justify-center">
        <svg viewBox="0 0 16 16" className="h-[14px] w-[14px]">
          <path d="M1.500 2.500h8M1.500 13.500h8M2 5h7v6H2zM13 2v2.500M13 6.500v3M13 11.500V14" fill="none" stroke="#222" strokeWidth="1.200" />
        </svg>
      </div>
      {taskIcons.map((t, i) => (
        <div key={i} className={`relative flex w-[41.400px] items-center justify-center ${t.active ? "bg-[#f0e9e6]" : ""}`}>
          {t.el}
          {t.run && <div className="absolute inset-x-[3px] bottom-0 h-[1.500px] bg-[#3f8fc9]" />}
        </div>
      ))}
      <div className="ml-auto flex items-center">
        <ChevronUp size={16} strokeWidth={1.300} color="#333" />
        <Volume1 size={14} strokeWidth={1.200} color="#444" className="ml-[4px]" />
        <svg viewBox="0 0 16 16" className="ml-[6px] h-[14px] w-[14px]">
          <rect x="0" y="1" width="5" height="4.500" fill="#3f9a3f" /><rect x="0" y="5.500" width="5" height="4.500" fill="#e8b72a" /><rect x="0" y="10" width="5" height="5" fill="#2f7a3f" />
          <rect x="5" y="1" width="5" height="4.500" fill="#9ab83a" /><rect x="5" y="5.500" width="5" height="4.500" fill="#d8522a" /><rect x="5" y="10" width="5" height="5" fill="#c92f2f" />
          <rect x="10" y="1" width="5" height="4.500" fill="#2f8fc9" /><rect x="10" y="5.500" width="5" height="4.500" fill="#e8862a" /><rect x="10" y="10" width="5" height="5" fill="#d83a3a" />
        </svg>
        <svg viewBox="0 0 16 16" className="ml-[6.500px] h-[15px] w-[15px]">
          <path d="M3 11a3 3 0 0 1 .5-6 4.500 4.500 0 0 1 8.500 1 2.500 2.500 0 0 1 0 5z" fill="#555" />
          <circle cx="11.500" cy="11.500" r="3.800" fill="#d8293a" />
          <path d="m10 10 3 3m0-3-3 3" stroke="#fff" />
        </svg>
        <svg viewBox="0 0 16 16" className="ml-[4px] h-[15px] w-[15px]">
          <rect x="5" y="1" width="6" height="10" rx="3" fill="#444" />
          <path d="M3 8c0 3 2 4.500 5 4.500s5-1.500 5-4.500M8 12.500V15" fill="none" stroke="#444" strokeWidth="1.200" />
        </svg>
        <svg viewBox="0 0 16 16" className="ml-[6.500px] h-[14px] w-[14px]">
          <rect x="3" y="4.500" width="12" height="7" fill="none" stroke="#333" />
          <rect x="1" y="6.500" width="2" height="3" fill="#333" />
          <rect x="3" y="4.500" width="4" height="7" fill="#333" />
        </svg>
        <svg viewBox="0 0 16 16" className="ml-[6px] h-[14px] w-[14px]">
          <path d="M3 2.500h12v9H3zM6 14.500h6M1 4v10" fill="none" stroke="#333" />
        </svg>
        <span className="ml-[9px] w-[22px] text-[10px]">ESP</span>
        <div className="ml-[7px] flex w-[50px] flex-col items-center text-[10px] leading-[15px]">
          <span>1:49 p. m.</span>
          <span>25/08/2020</span>
        </div>
        <svg viewBox="0 0 16 16" className="ml-[15.500px] mr-[18.500px] h-[15px] w-[15px]">
          <path d="M1.500 1.500h13v10H8l-3 3v-3H1.500z" fill="#222" />
          <path d="M4 4.500h8M4 7h8M4 9.500h5" stroke="#ddd" />
          <circle cx="12.500" cy="12" r="2.800" fill="#666" stroke="#dfd3cf" />
        </svg>
      </div>
    </div>
  );
}

export default function App() {
  return (
    <div className="relative flex h-[720px] w-[1280px] flex-col overflow-hidden bg-[#f0f0f0] font-['Roboto',sans-serif] text-[#333]">
      <div className="flex h-[19px] shrink-0 items-center bg-white pl-[1px]">
        <QgisLogo className="h-[15px] w-[15px]" />
        <span className="ml-[2px] text-[10px]">*Proyecto sin título — QGIS</span>
        <div className="ml-auto flex items-center gap-[30px] pr-[15px]">
          <div className="h-px w-[9px] bg-[#777]" />
          <svg viewBox="0 0 10 10" className="h-[9px] w-[9px]">
            <path d="M.5 2.500h7v7h-7zM2.500 2.500V.5h7v7h-2" fill="none" stroke="#555" />
          </svg>
          <svg viewBox="0 0 10 10" className="h-[10px] w-[10px]">
            <path d="m.5.500 9 9m0-9-9 9" stroke="#555" />
          </svg>
        </div>
      </div>
      <div className="flex h-[17px] shrink-0 items-center gap-[10px] border-b border-[#dedede] bg-[#f0f0f0] pl-[7px] text-[10px]">
        {menuBar.map((m) => <span key={m}><Mn s={m} /></span>)}
      </div>
      {rows.map((r, i) => (
        <div key={i} className={`flex shrink-0 items-center border-b border-[#d6d6d6] bg-[#f5f5f5] ${r.cls}`}>
          {r.items.map((t, j) => <Tok key={j} t={t} />)}
        </div>
      ))}
      <div className="flex min-h-0 flex-1 pt-px">
        <LeftPanel />
        <MapCanvas />
        <RightPanel />
      </div>
      <StatusBar />
      <Taskbar />
      <ContextMenu />
      <svg viewBox="0 0 12 18" className="absolute left-[180px] top-[301px] z-20 h-[14px] w-[9px]">
        <path d="M1 1v13l3.500-3 2.500 5.500 2-1-2.500-5H11z" fill="#fff" stroke="#000" />
      </svg>
    </div>
  );
}
